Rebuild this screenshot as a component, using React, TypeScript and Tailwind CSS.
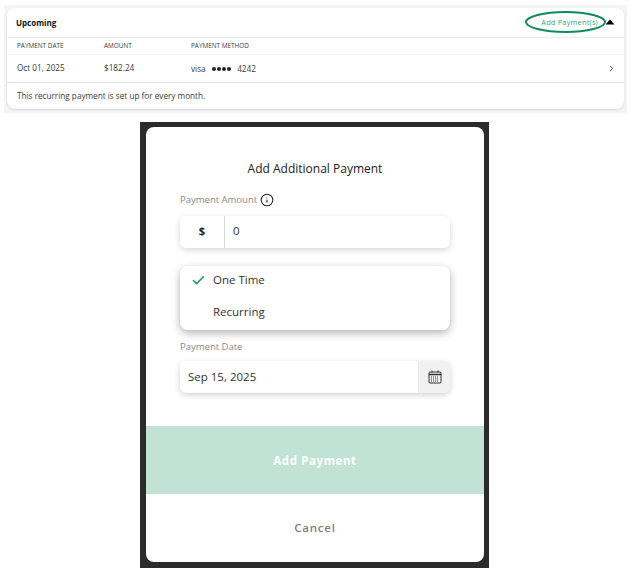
import React from 'react';
import { Check, ChevronRight, Info } from 'lucide-react';

const font = { fontFamily: "'Open Sans', sans-serif" };

const App: React.FC = () => {
  return (
    <div className="w-[631px] h-[576px] bg-white overflow-hidden" style={font}>
      {/* Upcoming card */}
      <div className="ml-[4px] mt-[5px] w-[623px] h-[108px] bg-[#f4f4f6] p-[3px]">
        <div className="h-[101px] rounded-[8px] bg-white shadow-[0_1px_2px_rgba(0,0,0,0.12)] flex flex-col">
          <div className="h-[30px] shrink-0 flex items-center justify-between pl-[9px] pr-[9px] border-b border-[#ececf0]">
            <span className="text-[8px] font-bold text-[#111]">Upcoming</span>
            <div className="flex items-center">
              <div className="relative">
                <span className="block text-[7.4px] text-[#2fa77a] tracking-[0.2px] mr-[8px]">Add Payment(s)</span>
                <svg className="absolute left-[-18px] top-[-8px]" width="86" height="26" viewBox="0 0 86 26" fill="none">
                  <ellipse cx="42.5" cy="13" rx="39.5" ry="10" stroke="#0d8a5f" strokeWidth="2" />
                </svg>
              </div>
              <svg className="ml-[-1px]" width="10" height="6" viewBox="0 0 10 6"><path d="M5 0.5 L9.5 5.5 L0.5 5.5 Z" fill="#000" /></svg>
            </div>
          </div>
          <div className="h-[17px] shrink-0 flex items-center pl-[10px] text-[6.4px] uppercase text-[#3a3a3a] border-b border-[#f5f5f7]">
            <span className="w-[87px]">Payment Date</span>
            <span className="w-[87px]">Amount</span>
            <span>Payment Method</span>
          </div>
          <div className="h-[28px] shrink-0 flex items-center pl-[10px] pr-[8px] text-[8.2px] text-[#3a3a3a] border-b border-[#dedee6]">
            <span className="w-[87px]">Oct 01, 2025</span>
            <span className="w-[87px]">$182.24</span>
            <span className="flex items-center mt-[1px]">
              visa
              <span className="ml-[6px] flex gap-[1.2px]">
                <i className="w-[4px] h-[4px] rounded-full bg-[#222]" />
                <i className="w-[4px] h-[4px] rounded-full bg-[#222]" />
                <i className="w-[4px] h-[4px] rounded-full bg-[#222]" />
                <i className="w-[4px] h-[4px] rounded-full bg-[#222]" />
              </span>
              <span className="ml-[6px]">4242</span>
            </span>
            <ChevronRight className="ml-auto text-[#222]" size={9} strokeWidth={2.2} />
          </div>
          <div className="flex-1 flex items-center pl-[10px] text-[8.2px] text-[#3a3a3a]">
            This recurring payment is set up for every month.
          </div>
        </div>
      </div>

      {/* Add payment modal */}
      <div className="ml-[140px] mt-[9px] w-[349px] h-[446px] bg-[#2b2b2b] pl-[6px] pr-[5px] pt-[5px] pb-[6px]">
        <div className="h-[435px] rounded-[8px] bg-white flex flex-col overflow-hidden">
          <div className="pt-[33px] text-center text-[12px] leading-[17px] text-[#222]">Add Additional Payment</div>
          <div className="mt-[16px] ml-[34px] w-[270px]">
            <div className="flex items-center gap-[3px] h-[14px] text-[9.5px] text-[#8a8a8a]">
              Payment Amount
              <Info size={14} className="text-[#222]" strokeWidth={1.8} />
            </div>
            <div className="mt-[9px] h-[32px] flex rounded-[6px] bg-white shadow-[0_2px_6px_rgba(0,0,0,0.16)]">
              <div className="w-[45px] flex items-center justify-center pb-[2px] text-[11px] font-bold text-[#222] border-r border-[#d8d8d8]">$</div>
              <div className="flex-1 flex items-center pl-[8px] pb-[3px] text-[11.5px] text-[#333]">0</div>
            </div>
            <div className="mt-[18px] h-[64px] rounded-[8px] bg-white shadow-[0_3px_8px_rgba(0,0,0,0.3)] flex flex-col gap-[4px] text-[11.5px] text-[#333]">
              <div className="h-[28px] flex items-center">
                <Check className="ml-[11px] text-[#1f9c72]" size={15} strokeWidth={2.5} />
                <span className="ml-[7px]">One Time</span>
              </div>
              <div className="h-[28px] flex items-center pl-[33px]">Recurring</div>
            </div>
            <div className="mt-[10px] h-[14px] flex items-center text-[9.5px] text-[#8a8a8a]">Payment Date</div>
            <div className="mt-[7px] h-[32px] flex rounded-[6px] overflow-hidden bg-white shadow-[0_2px_6px_rgba(0,0,0,0.18)]">
              <div className="flex-1 flex items-center pl-[8px] text-[11.5px] text-[#333]">Sep 15, 2025</div>
              <div className="w-[32px] flex items-center justify-center bg-[#f1f1f1] border-l border-[#ececec]">
                <svg width="14" height="14" viewBox="0 0 14 14" fill="none" stroke="#333">
                  <rect x="1" y="2" width="12" height="11" rx="1" strokeWidth="1" />
                  <path d="M1 4.5H13" strokeWidth="1.4" />
                  <path d="M4 0.5V2.5M10 0.5V2.5" strokeWidth="1" />
                  <path d="M3 7H11M3 9H11M3 11H11" strokeWidth="1" strokeDasharray="1 1" />
                </svg>
              </div>
            </div>
          </div>
          <div className="mt-[33px] h-[68px] shrink-0 flex items-center justify-center pt-[1px] bg-[#c0e3d5] text-[11.5px] font-bold tracking-[0.6px] text-white">Add Payment</div>
          <div className="flex-1 flex items-center justify-center text-[11.5px] font-semibold tracking-[0.8px] text-[#808080]">Cancel</div>
        </div>
      </div>
    </div>
  );
};

export default App;
